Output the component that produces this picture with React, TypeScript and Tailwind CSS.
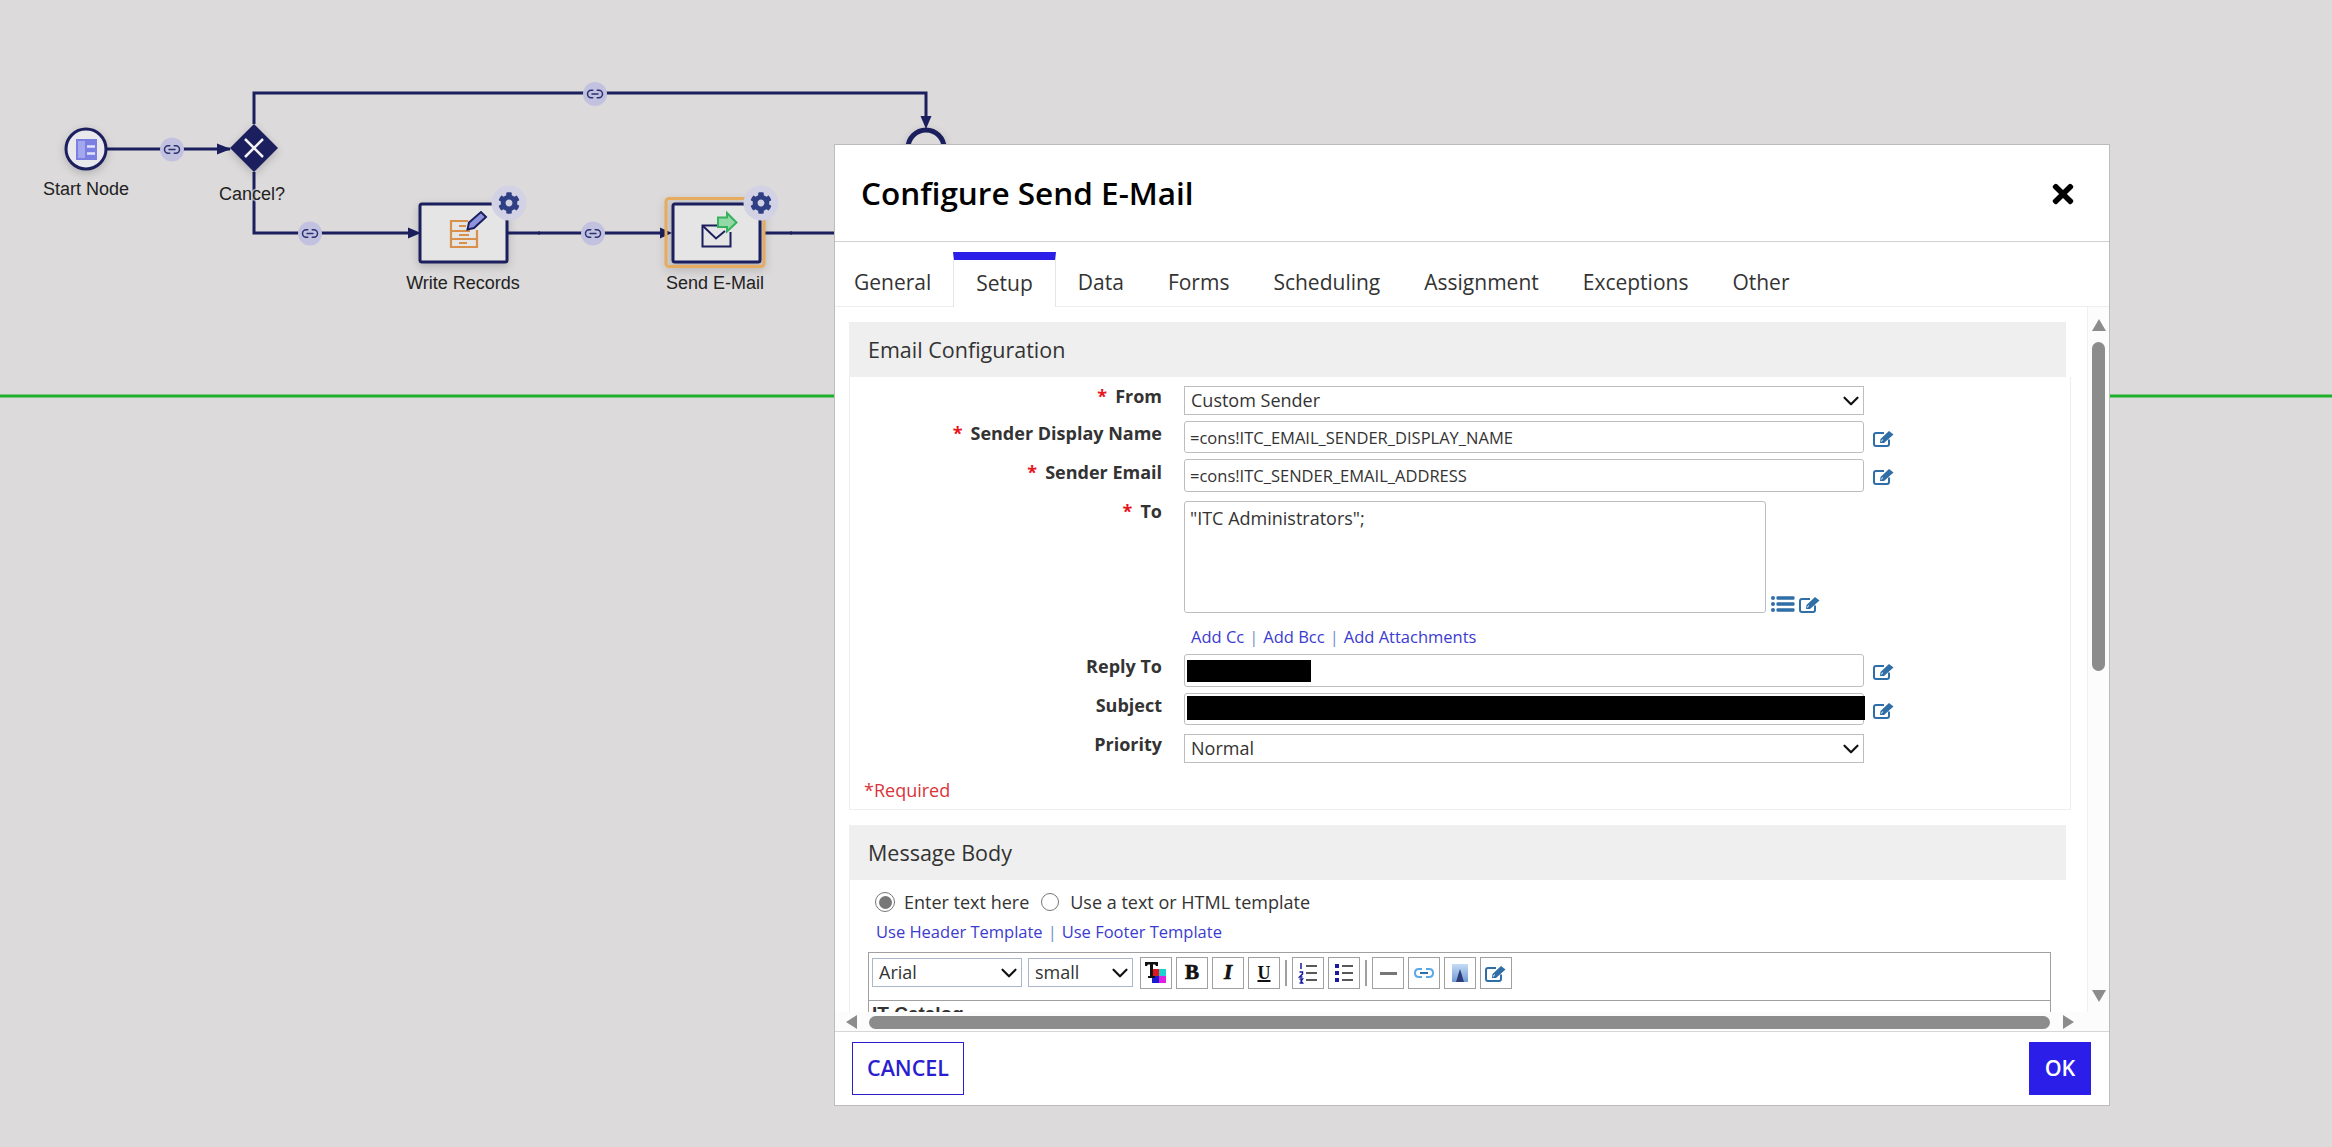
import { ChevronDown, Link2 } from "lucide-react";
import { FaCog, FaTimes } from "react-icons/fa";

const NAVY = "#1b1f5e";

function LinkBadge({ cx, cy }: { cx: number; cy: number }) {
  return (
    <g>
      <circle cx={cx} cy={cy} r={12} fill="#c2c2e0" />
      <Link2 x={cx - 9} y={cy - 9} width={18} height={18} color="#2b3272" strokeWidth={2} />
    </g>
  );
}

function GearBadge({ cx, cy }: { cx: number; cy: number }) {
  return (
    <g>
      <circle cx={cx} cy={cy} r={17.5} fill="#d2d2e4" />
      <FaCog x={cx - 11} y={cy - 11} size={22} color="#2f3f84" />
    </g>
  );
}

function Canvas() {
  const label = "fill-[#222] text-[18px] font-['Liberation_Sans',sans-serif]";
  return (
    <svg className="absolute inset-0" width={2332} height={1147}>
      <line x1={0} y1={396} x2={2332} y2={396} stroke="#1fb02a" strokeWidth={3} />

      {/* edges */}
      <g fill="none" stroke={NAVY} strokeWidth={3}>
        <path d="M106 149H230" />
        <path d="M254 124V93H926V118" />
        <path d="M254 172V233H410" />
        <path d="M508 233H664" />
        <path d="M765 233H840" />
        <path d="M539 231V235M791 231V235" strokeWidth={1} />
      </g>
      <polygon points="217,143.5 231,149 217,154.5" fill={NAVY} />
      <polygon points="408,227.5 421,233 408,238.5" fill={NAVY} />
      <polygon points="660,227.5 672,233 660,238.5" fill={NAVY} />
      <polygon points="920.5,116 931.5,116 926,129" fill={NAVY} />

      <LinkBadge cx={172} cy={149.5} />
      <LinkBadge cx={310} cy={233.5} />
      <LinkBadge cx={593} cy={233.5} />
      <LinkBadge cx={595} cy={94} />

      <g className="[filter:drop-shadow(0_3px_4px_rgba(0,0,0,0.18))]">
        {/* start node */}
        <circle cx={86} cy={149} r={20} fill="#e9e8ec" stroke={NAVY} strokeWidth={3} />
        {/* gateway */}
        <polygon points="254,124 278,148 254,172 230,148" fill={NAVY} />
        {/* end node, mostly behind the dialog */}
        <circle cx={926} cy={148} r={18} fill="#dcdadb" stroke={NAVY} strokeWidth={5} />
        {/* write records */}
        <rect x={420} y={204} width={87} height={58} rx={2} fill="#e6e5e5" stroke={NAVY} strokeWidth={3} />
        {/* send email */}
        <rect x={666} y={198.5} width={98} height={68} rx={3} fill="none" stroke="#e6ab5e" strokeWidth={3} />
        <rect x={673} y={204} width={87} height={58} rx={2} fill="#e6e5e5" stroke={NAVY} strokeWidth={3} />
      </g>

      {/* start glyph */}
      <rect x={76} y={139} width={21} height={21} fill="#7b7fe2" />
      <rect x={78} y={141} width={7} height={17} fill="#a5a7ee" />
      <path d="M87 146.5H95M87 153.5H95" stroke="#e4e4f8" strokeWidth={2.5} />

      <path d="M245 139L263 157M263 139L245 157" stroke="#f2f2f2" strokeWidth={2.5} />

      {/* write records glyph */}
      <g fill="none" stroke="#d9904a" strokeWidth={2.2}>
        <path d="M468 221H451V247H477V230" />
        <path d="M451 231H470M451 239H477" />
        <path d="M459 226H466M459 235H469M459 243H467" />
      </g>
      <path d="M467.500 229.500L469 222.500L481 212L486 217L474 228Z" fill="#8f94dc" stroke={NAVY} strokeWidth={2} />

      {/* send email glyph */}
      <g fill="none" stroke={NAVY} strokeWidth={2}>
        <path d="M717 225.500H702.500V246.500H730.500V232" />
        <path d="M703 226L716 238.500L725 231" />
      </g>
      <path d="M718 217.500H727V213L736.500 222.500L727 231.500V227H718Z" fill="#93d9a5" stroke="#36b25f" strokeWidth={2} />

      <GearBadge cx={509} cy={203} />
      <GearBadge cx={761} cy={203} />

      <text x={86} y={195} textAnchor="middle" className={label}>Start Node</text>
      <text x={252} y={200} textAnchor="middle" stroke="#dcdadb" strokeOpacity={0.7} strokeWidth={3} paintOrder="stroke" className={label}>Cancel?</text>
      <text x={463} y={289} textAnchor="middle" className={label}>Write Records</text>
      <text x={715} y={289} textAnchor="middle" className={label}>Send E-Mail</text>
    </svg>
  );
}

function EditIcon({ className = "" }: { className?: string }) {
  return (
    <svg width="22" height="17" viewBox="0 0 22 17" className={`shrink-0 ${className}`}>
      <path d="M16 9.500V14Q16 16 14 16H3Q1 16 1 14V5Q1 3 3 3H11" fill="none" stroke="#2f6ea6" strokeWidth="2" />
      <path d="M7 13L7.500 9L16 1L20.500 4.500L11 13Z" fill="#2f6ea6" />
      <path d="M8.500 11.500L9.500 9.500" stroke="#fff" strokeWidth="1" />
    </svg>
  );
}

function ListIcon() {
  return (
    <svg width="24" height="18" viewBox="0 0 24 18" className="shrink-0">
      <g fill="#2f6ea6">
        <circle cx="2" cy="3" r="2" />
        <circle cx="2" cy="9" r="2" />
        <circle cx="2" cy="15" r="2" />
        <rect x="5.500" y="1.200" width="18" height="3.600" rx="1" />
        <rect x="5.500" y="7.200" width="18" height="3.600" rx="1" />
        <rect x="5.500" y="13.200" width="18" height="3.600" rx="1" />
      </g>
    </svg>
  );
}

function Row({ label, required, offset, top, children }: { label: string; required?: boolean; offset: string; top: string; children: React.ReactNode }) {
  return (
    <div className={`flex ${top}`}>
      <div className={`w-[312px] mr-[22px] text-right text-[18px] leading-[24px] font-bold text-[#333] ${offset}`}>
        {required && <span className="text-[#e8141c] mr-[8px]">*</span>}
        {label}
      </div>
      {children}
    </div>
  );
}

function TextField({ value, height }: { value?: string; height: string }) {
  return (
    <input
      readOnly
      defaultValue={value}
      className={`w-[680px] ${height} px-[5px] bg-white border border-[#bdbdbd] rounded-[3px] text-[16.5px] text-[#333] outline-none`}
    />
  );
}

function Select({ value, className }: { value: string; className: string }) {
  return (
    <div className={`relative ${className}`}>
      <select defaultValue={value} className="appearance-none w-full h-full pl-[6px] bg-white border border-inherit text-[18px] text-[#333]">
        <option>{value}</option>
      </select>
      <ChevronDown size={26} strokeWidth={2} className="absolute right-0 top-[2px] text-[#111] pointer-events-none" />
    </div>
  );
}

function ToolButton({ children }: { children: React.ReactNode }) {
  return <div className="w-[32px] h-[32px] flex items-center justify-center border border-[#a0a0a0] bg-white">{children}</div>;
}

function SectionHeader({ title }: { title: string }) {
  return <div className="w-[1217px] h-[55px] flex items-center pl-[19px] pt-[1px] bg-[#efefef] text-[21.5px] font-medium text-[#333]">{title}</div>;
}

function Arrow({ points, size = "w-[14px] h-[12px]", viewBox = "0 0 14 12" }: { points: string; size?: string; viewBox?: string }) {
  return (
    <svg className={size} viewBox={viewBox}>
      <polygon points={points} fill="#8c8c8c" />
    </svg>
  );
}

function Toolbar() {
  return (
    <div className="h-[48px] flex items-start pt-[4px] pl-[3px] border-b border-[#a0a0a0]">
      <Select value="Arial" className="w-[150px] h-[29px] mt-[1px] border-[#a9b6cc]" />
      <Select value="small" className="w-[105px] h-[29px] mt-[1px] ml-[6px] border-[#a9b6cc]" />
      <div className="flex items-center gap-[4px] ml-[7px]">
        <ToolButton>
          <svg width="24" height="24" viewBox="0 0 24 24">
            <rect x="8" y="8" width="7" height="7" fill="#e2141c" />
            <rect x="15" y="8" width="7" height="7" fill="#1fd0d0" />
            <rect x="8" y="15" width="7" height="7" fill="#1a1ad0" />
            <rect x="15" y="15" width="7" height="7" fill="#e020e0" />
            <path d="M1 1H14V5H12L11 3.500H9V15H11V17H4V15H6V3.500H4L3 5H1Z" fill="#111" />
          </svg>
        </ToolButton>
        <ToolButton><span className="font-['Liberation_Serif',serif] font-bold text-[21px] text-[#111] [-webkit-text-stroke:0.7px_#111]">B</span></ToolButton>
        <ToolButton><span className="font-['Liberation_Serif',serif] font-bold italic text-[21px] text-[#111] [-webkit-text-stroke:0.7px_#111]">I</span></ToolButton>
        <ToolButton><span className="font-['Liberation_Serif',serif] font-bold underline decoration-2 text-[18px] text-[#111]">U</span></ToolButton>
        <div className="w-[2px] h-[26px] mx-[1px] bg-[#a0a0a0]" />
        <ToolButton>
          <svg width="20" height="22" viewBox="0 0 20 22">
            <path d="M3 1V7M1.500 10H4.500V12L1.500 15H4.500M1.500 17H4.500L3 19L4.500 21H1.500" fill="none" stroke="#1a1a9c" strokeWidth="1.500" />
            <path d="M8 4H19M8 11H19M8 18H19" stroke="#222" strokeWidth="1.500" />
          </svg>
        </ToolButton>
        <ToolButton>
          <svg width="20" height="22" viewBox="0 0 20 22">
            <rect x="1" y="2" width="4" height="4" fill="#1a1a9c" />
            <rect x="1" y="9" width="4" height="4" fill="#1a1a9c" />
            <rect x="1" y="16" width="4" height="4" fill="#1a1a9c" />
            <path d="M8 4H19M8 11H19M8 18H19" stroke="#222" strokeWidth="1.500" />
          </svg>
        </ToolButton>
        <div className="w-[2px] h-[26px] mx-[1px] bg-[#a0a0a0]" />
        <ToolButton><div className="w-[17px] h-[3px] bg-[#777]" /></ToolButton>
        <ToolButton>
          <svg width="20" height="10" viewBox="0 0 20 10" fill="none" stroke="#5aa8e8" strokeWidth="2">
            <path d="M8 1H5Q1 1 1 5T5 9H8" />
            <path d="M12 1H15Q19 1 19 5T15 9H12" />
            <path d="M6 5H14" stroke="#2f6ea6" />
          </svg>
        </ToolButton>
        <ToolButton>
          <svg width="16" height="18" viewBox="0 0 16 18">
            <defs>
              <linearGradient id="sky" x1="0" y1="0" x2="0" y2="1">
                <stop offset="0" stopColor="#c4dcf4" />
                <stop offset="1" stopColor="#6f9ad6" />
              </linearGradient>
            </defs>
            <rect width="16" height="18" fill="url(#sky)" />
            <polygon points="8,5 12,18 4,18" fill="#2f3c7a" />
          </svg>
        </ToolButton>
        <ToolButton><EditIcon /></ToolButton>
      </div>
    </div>
  );
}

export default function App() {
  const tabs = ["General", "Setup", "Data", "Forms", "Scheduling", "Assignment", "Exceptions", "Other"];
  return (
    <div className="relative w-[2332px] h-[1147px] overflow-hidden bg-[#dcdadb] font-['Open_Sans',sans-serif]">
      <Canvas />

      <div className="absolute left-[834px] top-[144px] w-[1276px] h-[962px] flex flex-col bg-white border border-[#bcbcbc]">
        {/* title bar */}
        <div className="h-[97px] shrink-0 flex items-center justify-between pl-[26px] pr-[31px] border-b border-[#d0d0d0]">
          <h1 className="text-[31.5px] font-semibold text-black">Configure Send E-Mail</h1>
          <FaTimes className="text-[30px] text-black mt-[2px]" />
        </div>

        {/* tabs */}
        <div className="h-[65px] shrink-0 flex items-end pt-[10px] pl-[0px] border-b border-[#eeeeee]">
          {tabs.map((t, i) => (
            <div
              key={t}
              className={
                t === "Setup"
                  ? "relative -mb-px h-[55px] px-[22px] flex items-center border-x border-[#e6e6e6] border-t-[8px] border-t-[#2a1ee8] bg-white text-[21px] text-[#333]"
                  : `h-[55px] pt-[9px] px-[22px] flex items-center text-[21px] text-[#333] ${i === 0 ? "-ml-[3px]" : ""}`
              }
            >
              {t}
            </div>
          ))}
        </div>

        {/* body */}
        <div className="flex-1 min-h-0 flex flex-col">
          <div className="flex-1 min-h-0 flex">
            <div className="flex-1 min-w-0 overflow-hidden pl-[14px] pt-[15px]">
              <div className="w-[1222px]">
                <SectionHeader title="Email Configuration" />
                <div className="h-[433px] border-x border-b border-[#eeeeee]">
                  <Row label="From" required offset="-mt-[2px]" top="pt-[9px]">
                    <Select value="Custom Sender" className="w-[680px] h-[29px] border-[#bdbdbd]" />
                  </Row>
                  <Row label="Sender Display Name" required offset="" top="mt-[6px]">
                    <TextField value="=cons!ITC_EMAIL_SENDER_DISPLAY_NAME" height="h-[32px]" />
                    <EditIcon className="ml-[9px] mt-[9px]" />
                  </Row>
                  <Row label="Sender Email" required offset="mt-[1px]" top="mt-[6px]">
                    <TextField value="=cons!ITC_SENDER_EMAIL_ADDRESS" height="h-[33px]" />
                    <EditIcon className="ml-[9px] mt-[9px]" />
                  </Row>
                  <Row label="To" required offset="-mt-[2px]" top="mt-[9px]">
                    <textarea
                      readOnly
                      defaultValue={'"ITC Administrators";'}
                      className="w-[582px] h-[112px] px-[5px] py-[3px] resize-none bg-white border border-[#bdbdbd] rounded-[3px] text-[18px] text-[#333] outline-none"
                    />
                    <div className="self-end flex items-center gap-[4px] ml-[5px]">
                      <ListIcon />
                      <EditIcon />
                    </div>
                  </Row>
                  <div className="h-[41px] pl-[341px] pt-[7px] flex items-center gap-[5px] text-[16.5px] text-[#3b3bcf]">
                    <span>Add Cc</span>
                    <span className="text-[#6f8fc6]">|</span>
                    <span>Add Bcc</span>
                    <span className="text-[#6f8fc6]">|</span>
                    <span>Add Attachments</span>
                  </div>
                  <Row label="Reply To" offset="" top="">
                    <div className="relative">
                      <TextField height="h-[33px]" />
                      <div className="absolute left-[3px] top-[6px] w-[124px] h-[22px] bg-black" />
                    </div>
                    <EditIcon className="ml-[9px] mt-[9px]" />
                  </Row>
                  <Row label="Subject" offset="" top="mt-[6px]">
                    <div className="relative">
                      <TextField height="h-[32px]" />
                      <div className="absolute left-[3px] top-[3px] w-[678px] h-[24px] bg-black" />
                    </div>
                    <EditIcon className="ml-[9px] mt-[9px]" />
                  </Row>
                  <Row label="Priority" offset="-mt-[2px]" top="mt-[9px]">
                    <Select value="Normal" className="w-[680px] h-[29px] border-[#bdbdbd]" />
                  </Row>
                  <div className="mt-[15px] pl-[14px] text-[18px] leading-[24px] text-[#d9343a]">*Required</div>
                </div>

                <div className="mt-[15px]">
                  <SectionHeader title="Message Body" />
                  <div className="border-l border-[#eeeeee] pl-[18px]">
                    <div className="h-[44px] flex items-center pl-[7px] text-[18px] text-[#333]">
                      <div className="w-[20px] h-[20px] flex items-center justify-center rounded-full border border-[#777]">
                        <div className="w-[13px] h-[13px] rounded-full bg-[#777]" />
                      </div>
                      <span className="ml-[9px]">Enter text here</span>
                      <div className="w-[18px] h-[18px] ml-[12px] rounded-full border border-[#777]" />
                      <span className="ml-[11px]">Use a text or HTML template</span>
                    </div>
                    <div className="h-[28px] -mt-[6px] flex items-center gap-[5px] pl-[8px] text-[16.5px] text-[#3b3bcf]">
                      <span>Use Header Template</span>
                      <span className="text-[#6f8fc6]">|</span>
                      <span>Use Footer Template</span>
                    </div>
                    <div className="w-[1183px] mt-[6px] border border-[#a0a0a0]">
                      <Toolbar />
                      <div className="pl-[3px] pt-[2px] text-[19px] font-bold leading-[22px] text-[#333] font-['Liberation_Sans',sans-serif]">IT Catalog</div>
                    </div>
                  </div>
                </div>
              </div>
            </div>

            {/* vertical scrollbar */}
            <div className="w-[22px] shrink-0 flex flex-col items-center pt-[12px] pb-[10px] bg-[#fcfcfc] border-l border-[#f0f0f0]">
              <Arrow points="7,0 14,12 0,12" />
              <div className="w-[13px] h-[329px] mt-[11px] rounded-full bg-[#8c8c8c]" />
              <div className="flex-1" />
              <Arrow points="0,0 14,0 7,12" />
            </div>
          </div>

          {/* horizontal scrollbar */}
          <div className="h-[19px] shrink-0 flex items-center pl-[11px] pt-[1px] bg-[#fcfcfc]">
            <Arrow points="0,7 11,0 11,14" size="w-[11px] h-[14px]" viewBox="0 0 11 14" />
            <div className="w-[1181px] h-[13px] ml-[12px] rounded-full bg-[#8c8c8c]" />
            <Arrow points="0,0 11,7 0,14" size="w-[11px] h-[14px] ml-[13px]" viewBox="0 0 11 14" />
          </div>
        </div>

        {/* footer */}
        <div className="h-[74px] shrink-0 flex items-start justify-between pt-[10px] pl-[17px] pr-[18px] border-t border-[#d6d6d6]">
          <button className="w-[112px] h-[53px] border border-[#2a1ed0] text-[21.5px] font-semibold text-[#2a1ed0]">CANCEL</button>
          <button className="w-[62px] h-[53px] bg-[#2a1ee8] text-[21.5px] font-semibold text-white">OK</button>
        </div>
      </div>
    </div>
  );
}
